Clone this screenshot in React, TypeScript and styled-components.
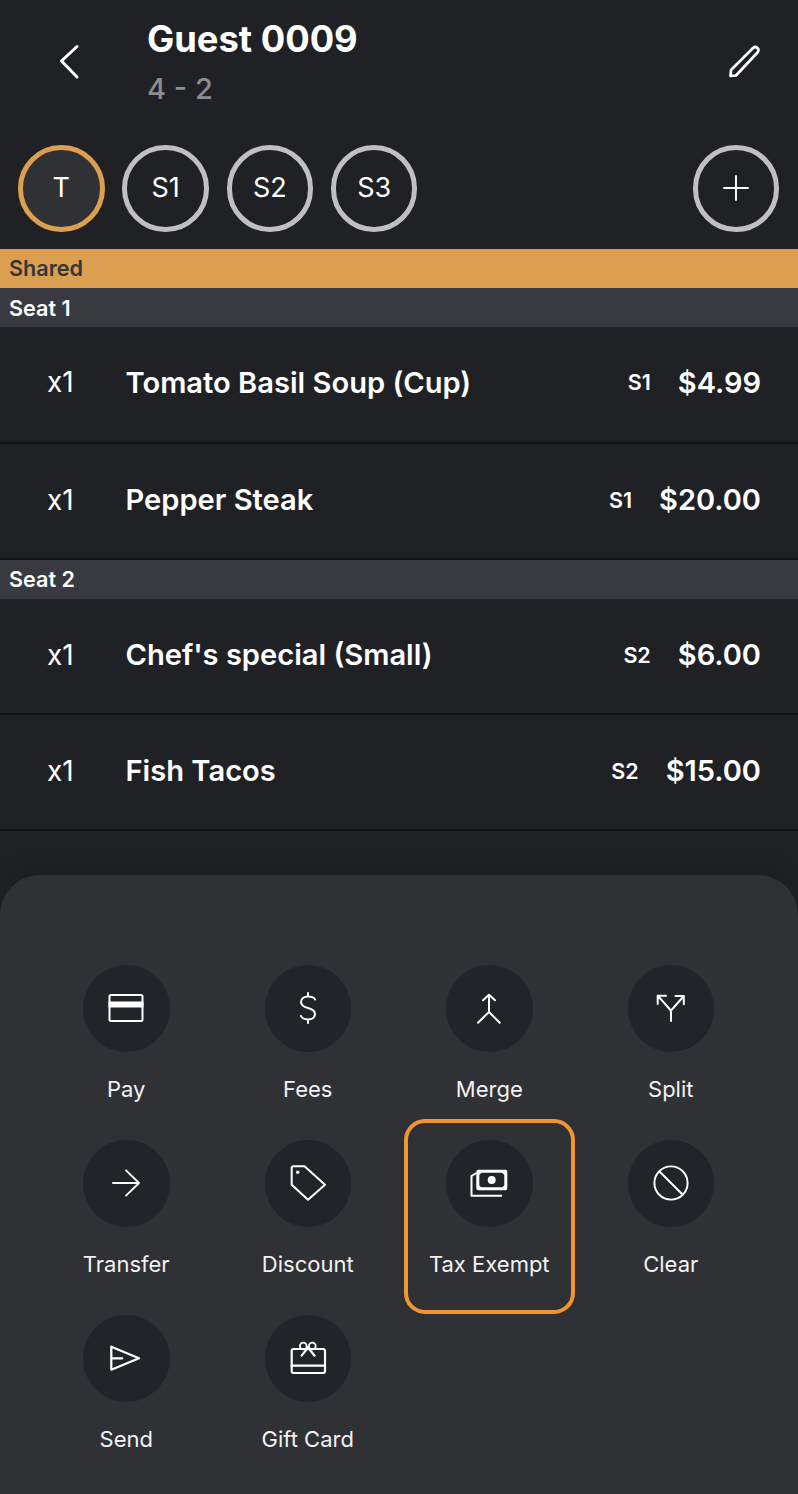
import React from "react";
import styled, { createGlobalStyle } from "styled-components";

const Global = createGlobalStyle`
  html, body { margin: 0; padding: 0; background: #202125; }
  * { box-sizing: border-box; }
`;
const Page = styled.div`
  width: 798px; height: 1494px; background: #202125; color: #fff; display: flex; flex-direction: column;
  font-family: Inter, "Liberation Sans", sans-serif; overflow: hidden;
`;
const Header = styled.header`display: flex; height: 126px; padding: 19px 34px 0 51px; align-items: flex-start;`;
const Back = styled.div`width: 96px; padding-top: 20px;`;
const Titles = styled.div`flex: 1;`;
const Title = styled.div`font-size: 36.3px; font-weight: 700; line-height: 40px;`;
const Sub = styled.div`font-size: 29px; font-weight: 500; color: #8c8d90; line-height: 36px; margin-top: 12px;`;
const Edit = styled.div`padding-top: 21px;`;
const SeatRow = styled.div`display: flex; gap: 17.8px; padding: 19px 19px 0 18px; height: 123px;`;
const Seat = styled.div<{ $active?: boolean }>`
  width: 86.5px; height: 86.5px; border-radius: 50%; border: 5px solid ${p => p.$active ? "#dc9f50" : "#c0c0c0"};
  display: flex; align-items: center; justify-content: center; font-size: 27px; padding-bottom: 1px;
  background: ${p => p.$active ? "#303135" : "transparent"};
`;
const AddSeat = styled(Seat)`margin-left: auto;`;
const Band = styled.div<{ $shared?: boolean; $drop?: boolean }>`
  height: 39px; padding: ${p => p.$drop ? "1px 0 0 9px" : "0 0 1px 9px"}; display: flex; align-items: center; font-size: 21.6px; font-weight: 600;
  background: ${p => p.$shared ? "#dc9f50" : "#393a40"}; color: ${p => p.$shared ? "#36363a" : "#fff"};
`;
const Row = styled.div<{ $first?: boolean }>`
  height: ${p => p.$first ? 117 : 116}px; display: flex; align-items: center; border-bottom: 2px solid #101317;
  padding: 0 37px ${p => p.$first ? 5 : 3}px 47px;
`;
const Qty = styled.div`width: 78.5px; font-size: 28px; font-weight: 400;`;
const Name = styled.div`flex: 1; font-size: 29.1px; font-weight: 600;`;
const SeatTag = styled.div`font-size: 21.5px; font-weight: 600; margin-right: 27px;`;
const Price = styled.div`font-size: 29px; font-weight: 600;`;
const Sheet = styled.section`
  margin-top: 44px; flex: 1; background: #303135; border-radius: 40px 40px 0 0; padding: 90px 35.5px 0;
  box-shadow: 0 -6px 24px rgba(0, 0, 0, 0.12);
  display: grid; grid-template-columns: repeat(4, 181.5px); grid-auto-rows: 175px; justify-content: start;
`;
const Action = styled.div`
  position: relative; display: flex; flex-direction: column; align-items: center;
  font-size: 22px; color: #f2f2f2;
`;
const Circle = styled.div`
  width: 86.5px; height: 86.5px; border-radius: 50%; background: #212428; display: flex; align-items: center; justify-content: center; margin-bottom: 24px;
`;
const Highlight = styled.div`
  position: absolute; left: 5.5px; top: -21px; width: 171px; height: 195px; border: 4px solid #ef9633; border-radius: 21px;
`;
const Ico = ({ children, w = 2 }: { children: React.ReactNode; w?: number }) => (
  <svg width="44" height="44" viewBox="-22 -22 44 44" fill="none" stroke="#fff" strokeWidth={w} strokeLinecap="round" strokeLinejoin="round">
    {children}
  </svg>
);
const Top = ({ children, size, w }: { children: React.ReactNode; size: number; w: number }) => (
  <svg width={size} height={size} viewBox={`0 0 ${size} ${size}`} fill="none" stroke="#fff" strokeWidth={w} strokeLinecap="round" strokeLinejoin="round" style={{ display: "block" }}>
    {children}
  </svg>
);
const items: [string, React.ReactNode][] = [
  ["Pay", <Ico><rect x="-16.5" y="-13" width="33" height="26" rx="1.5" /><path d="M-16.5-5.500h33v4h-33z" fill="#fff" /></Ico>],
  ["Fees", <Ico><path d="M7-8.500C6-11 3.500-11.500 0-11.500c-4 0-7 2-7 5.500 0 3.500 3 5 7 6 4 1 7 2.500 7 6 0 3.500-3 5.500-7 5.500-3.500 0-6-1-7-3.500M0-15v3.500M0 11.500V15" /></Ico>],
  ["Merge", <Ico><path d="M-6-7.700 0-13.300l6 5.600M0-13.300V4L-11 14.700M0 4 10.700 14.700" /></Ico>],
  ["Split", <Ico><path d="M-13.300-4v-8.300h8.300M4.500-12h8.300v8.300M-13.300-12.300-1 1.500Q0 2.700 0 4.500V13M12.800-12 1 1.500" /></Ico>],
  ["Transfer", <Ico w={1.8}><path d="M-13 0H13M0-12.700 13 0 0 12.700" /></Ico>],
  ["Discount", <Ico><path d="M-16.300-15a1.700 1.700 0 0 1 1.700-1.700H-3.500L17 1.700 0 16.700-16.300 1.700Z" /><circle cx="-10.300" cy="-10.700" r="1.700" fill="#fff" stroke="none" /></Ico>],
  ["Tax Exempt", <Ico w={3}><rect x="-11.200" y="-11.800" width="28" height="17.600" rx=".5" /><path d="M-10.500-10.800h3l-3 3ZM16-10.800h-3l3 3ZM16 5.200h-3l3-3ZM-10.500 5.200h3l-3-3Z" fill="#fff" strokeWidth="1" /><circle cx="2.700" cy="-3" r="4" fill="#fff" stroke="none" /><path d="M-13.500-9.500-17.500-7V12.700H12.300" strokeWidth="2" /></Ico>],
  ["Clear", <Ico w={1.9}><circle r="16.600" /><path d="M-11.500-11.500 11.500 11.500" /></Ico>],
  ["Send", <Ico w={2.2}><path d="M-14.700-11.300 13 .3-14.700 11.700ZM-14.700.3H-3.700" /></Ico>],
  ["Gift Card", <Ico w={2.2}><rect x="-16.300" y="-9" width="33.300" height="24" rx="2" /><path d="M-16.300 7.700H17M-6.300-2.300 0-10.500 6.600-2.300" /><circle cx="-4.700" cy="-12" r="3.400" strokeWidth="1.800" /><circle cx="4.300" cy="-12" r="3.400" strokeWidth="1.800" /></Ico>],
];
const Item = ({ first, n, t, p }: { first?: boolean; n: string; t: string; p: string }) => (
  <Row $first={first}><Qty>x1</Qty><Name>{n}</Name><SeatTag>{t}</SeatTag><Price>{p}</Price></Row>
);
export default function App() {
  return (
    <Page>
      <Global />
      <Header>
        <Back>
          <Top size={44} w={3}><path d="M26 7.500 10.500 22 26 38" /></Top>
        </Back>
        <Titles><Title>Guest 0009</Title><Sub>4 - 2</Sub></Titles>
        <Edit>
          <Top size={44} w={2.7}><path d="M10.500 36 11 30 33 8Q35.500 6 37.500 8 39.500 10 37.500 12.500L16 35.500Z" /></Top>
        </Edit>
      </Header>
      <SeatRow>
        <Seat $active>T</Seat><Seat>S1</Seat><Seat>S2</Seat><Seat>S3</Seat>
        <AddSeat><Top size={30} w={1.9}><path d="M15 3V27M3 15H27" /></Top></AddSeat>
      </SeatRow>
      <Band $shared>Shared</Band>
      <Band $drop>Seat 1</Band>
      <Item first n="Tomato Basil Soup (Cup)" t="S1" p="$4.99" />
      <Item n="Pepper Steak" t="S1" p="$20.00" />
      <Band>Seat 2</Band>
      <Item n="Chef's special (Small)" t="S2" p="$6.00" />
      <Item n="Fish Tacos" t="S2" p="$15.00" />
      <Sheet>
        {items.map(([label, icon]) => (
          <Action key={label}>
            {label === "Tax Exempt" && <Highlight />}
            <Circle>{icon}</Circle>
            {label}
          </Action>
        ))}
      </Sheet>
    </Page>
  );
}
